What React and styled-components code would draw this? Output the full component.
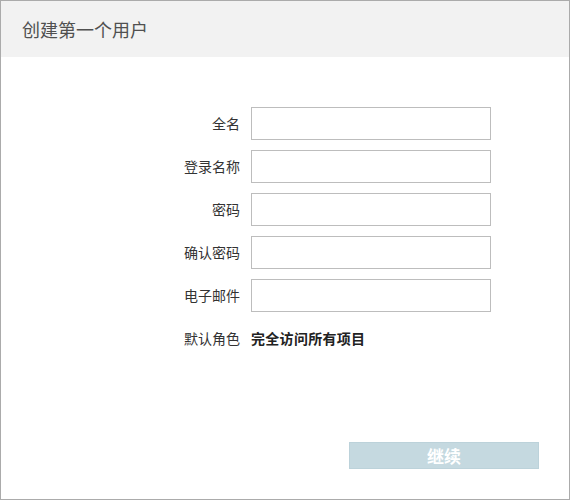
import { Fragment } from 'react'
import styled, { createGlobalStyle } from 'styled-components'

const Global = createGlobalStyle`
  body {
    margin: 0;
    background: #fff;
    font-family: "Noto Sans CJK SC", "Noto Sans", sans-serif;
  }
`

const Frame = styled.div`
  width: 570px;
  height: 500px;
  box-sizing: border-box;
  border: 1px solid #ababab;
  display: flex;
  flex-direction: column;
  background: #fff;
`

const Header = styled.div`
  height: 56px;
  background: #f2f2f2;
  display: flex;
  align-items: center;
  padding-left: 21px;
  flex-shrink: 0;
`

const Title = styled.h1`
  margin: 0;
  font-size: 18px;
  font-weight: normal;
  color: #505050;
`

const Form = styled.div`
  display: grid;
  grid-template-columns: 239px 240px;
  column-gap: 11px;
  row-gap: 10px;
  margin-top: 50px;
`

const Label = styled.label`
  text-align: right;
  font-size: 14px;
  color: #333;
  line-height: 33px;
`

const Input = styled.input`
  box-sizing: border-box;
  width: 240px;
  height: 33px;
  border: 1px solid #bdbdbd;
  background: #fff;
  margin: 0;
  outline: none;
  font-size: 14px;
`

const Value = styled.div`
  font-size: 14px;
  font-weight: bold;
  color: #222;
  line-height: 33px;
  letter-spacing: 0.3px;
`

const Footer = styled.div`
  margin-top: auto;
  display: flex;
  justify-content: flex-end;
  padding: 0 30px 30px 0;
`

const Button = styled.button`
  width: 190px;
  height: 27px;
  box-sizing: border-box;
  border: 1px solid #bcd2da;
  background: #c5d9e0;
  color: #fff;
  font-family: inherit;
  font-size: 17px;
  font-weight: bold;
  padding: 0;
  line-height: 25px;
`

const fields = ['全名', '登录名称', '密码', '确认密码', '电子邮件']

export default function App() {
  return (
    <Frame>
      <Global />
      <Header>
        <Title>创建第一个用户</Title>
      </Header>
      <Form>
        {fields.map((f) => (
          <Fragment key={f}>
            <Label>{f}</Label>
            <Input type={f.includes('密码') ? 'password' : 'text'} />
          </Fragment>
        ))}
        <Label>默认角色</Label>
        <Value>完全访问所有项目</Value>
      </Form>
      <Footer>
        <Button>继续</Button>
      </Footer>
    </Frame>
  )
}
